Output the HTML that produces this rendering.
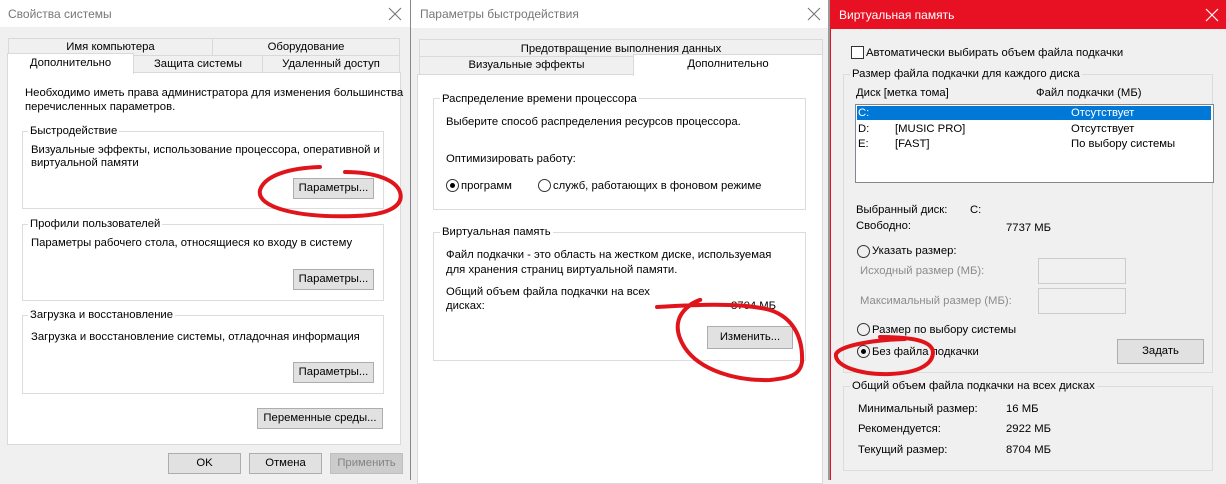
<!DOCTYPE html>
<html><head><meta charset="utf-8"><style>
*{margin:0;padding:0;box-sizing:border-box}
body{width:1226px;height:480px;overflow:hidden;background:#f0f0f0;font-family:"Liberation Sans",sans-serif;font-size:11.3px;color:#000;position:relative}
.a{position:absolute;white-space:nowrap;line-height:14px}
.box{position:absolute;border:1px solid #dcdcdc}
.w{position:absolute;background:#fff}
.btn{position:absolute;background:#e1e1e1;border:1px solid #adadad;text-align:center;line-height:18px}
.tab{position:absolute;background:#f0f0f0;border:1px solid #d9d9d9;text-align:center;line-height:16px}
.lbl{position:absolute;background:#fff;padding:0 2px;line-height:14px;white-space:nowrap}
.g{color:#8c8c8c}
.rad{position:absolute;width:13px;height:13px;border:1px solid #333;border-radius:50%;background:#fff}
.rad.on::after{content:"";position:absolute;left:3px;top:3px;width:5px;height:5px;border-radius:50%;background:#000}
.x{position:absolute;width:14px;height:14px}
</style></head><body>
<!-- Window 1 -->
<div class="w" style="left:0;top:0;width:410px;height:27px"></div>
<div class="a" style="left:8px;top:7px;color:#777;font-size:12px">Свойства системы</div>
<svg class="x" style="left:388px;top:7px" viewBox="0 0 14 14" stroke="#777" stroke-width="1.1"><path d="M1 1L13 13M13 1L1 13"/></svg>
<div style="position:absolute;left:410px;top:0;width:1px;height:480px;background:#888"></div>
<div class="tab" style="left:8px;top:38px;width:205px;height:18px">Имя компьютера</div>
<div class="tab" style="left:212px;top:38px;width:188px;height:18px">Оборудование</div>
<div class="tab" style="left:133px;top:55px;width:130px;height:18px">Защита системы</div>
<div class="tab" style="left:262px;top:55px;width:138px;height:18px">Удаленный доступ</div>
<div class="w" style="left:7px;top:72px;width:394px;height:373px;border:1px solid #d9d9d9"></div>
<div class="w" style="left:7px;top:53px;width:127px;height:21px;border:1px solid #d9d9d9;border-bottom:none;text-align:center;line-height:18px">Дополнительно</div>
<div class="a" style="left:25px;top:86px">Необходимо иметь права администратора для изменения большинства</div>
<div class="a" style="left:25px;top:100px">перечисленных параметров.</div>
<div class="box" style="left:22px;top:131px;width:362px;height:78px"></div>
<div class="lbl" style="left:28px;top:124px">Быстродействие</div>
<div class="a" style="left:31px;top:143px">Визуальные эффекты, использование процессора, оперативной и</div>
<div class="a" style="left:31px;top:156px">виртуальной памяти</div>
<div class="btn" style="left:293px;top:178px;width:81px;height:21px">Параметры...</div>
<div class="box" style="left:22px;top:224px;width:362px;height:77px"></div>
<div class="lbl" style="left:28px;top:217px">Профили пользователей</div>
<div class="a" style="left:31px;top:236px">Параметры рабочего стола, относящиеся ко входу в систему</div>
<div class="btn" style="left:293px;top:269px;width:81px;height:21px">Параметры...</div>
<div class="box" style="left:22px;top:315px;width:362px;height:79px"></div>
<div class="lbl" style="left:28px;top:308px">Загрузка и восстановление</div>
<div class="a" style="left:31px;top:330px">Загрузка и восстановление системы, отладочная информация</div>
<div class="btn" style="left:293px;top:362px;width:81px;height:21px">Параметры...</div>
<div class="btn" style="left:257px;top:408px;width:126px;height:21px">Переменные среды...</div>
<div class="btn" style="left:168px;top:453px;width:73px;height:21px">OK</div>
<div class="btn" style="left:249px;top:453px;width:73px;height:21px">Отмена</div>
<div class="btn" style="left:330px;top:453px;width:73px;height:21px;background:#ccc;border-color:#bfbfbf;color:#838383">Применить</div>

<!-- Window 2 -->
<div class="w" style="left:411px;top:0;width:418px;height:28px"></div>
<div class="a" style="left:420px;top:7px;color:#777;font-size:12px">Параметры быстродействия</div>
<svg class="x" style="left:807px;top:7px" viewBox="0 0 14 14" stroke="#777" stroke-width="1.1"><path d="M1 1L13 13M13 1L1 13"/></svg>
<div style="position:absolute;left:828px;top:0;width:2px;height:480px;background:#9a9a9a"></div>
<div class="tab" style="left:419px;top:39px;width:404px;height:18px;line-height:18px">Предотвращение выполнения данных</div>
<div class="tab" style="left:419px;top:56px;width:215px;height:19px">Визуальные эффекты</div>
<div class="w" style="left:417px;top:74px;width:406px;height:410px;border:1px solid #d9d9d9"></div>
<div class="w" style="left:633px;top:54px;width:190px;height:22px;border:1px solid #d9d9d9;border-bottom:none;text-align:center;line-height:18px">Дополнительно</div>
<div class="box" style="left:433px;top:98px;width:373px;height:112px"></div>
<div class="lbl" style="left:440px;top:92px">Распределение времени процессора</div>
<div class="a" style="left:446px;top:115px">Выберите способ распределения ресурсов процессора.</div>
<div class="a" style="left:446px;top:152px">Оптимизировать работу:</div>
<div class="rad on" style="left:446px;top:179px"></div>
<div class="a" style="left:461px;top:179px">программ</div>
<div class="rad" style="left:538px;top:179px"></div>
<div class="a" style="left:553px;top:179px">служб, работающих в фоновом режиме</div>
<div class="box" style="left:433px;top:232px;width:373px;height:129px"></div>
<div class="lbl" style="left:440px;top:225px">Виртуальная память</div>
<div class="a" style="left:446px;top:248px">Файл подкачки - это область на жестком диске, используемая</div>
<div class="a" style="left:446px;top:263px">для хранения страниц виртуальной памяти.</div>
<div class="a" style="left:446px;top:285px">Общий объем файла подкачки на всех</div>
<div class="a" style="left:446px;top:299px">дисках:</div>
<div class="a" style="left:731px;top:299px">8704 МБ</div>
<div class="btn" style="left:707px;top:326px;width:86px;height:23px;line-height:21px">Изменить...</div>

<!-- Window 3 -->
<div style="position:absolute;left:830px;top:0;width:396px;height:480px;background:#f0f0f0;border-left:1px solid #e81123"></div>
<div style="position:absolute;left:830px;top:0;width:396px;height:29px;background:#e81123"></div>
<div class="a" style="left:839px;top:8px;color:#fff;font-size:12px">Виртуальная память</div>
<svg class="x" style="left:1205px;top:8px" viewBox="0 0 14 14" stroke="#fff" stroke-width="1.2"><path d="M1 1L13 13M13 1L1 13"/></svg>
<div style="position:absolute;left:851px;top:46px;width:13px;height:13px;border:1px solid #333;background:#fff"></div>
<div class="a" style="left:866px;top:46px">Автоматически выбирать объем файла подкачки</div>
<div class="box" style="left:843px;top:74px;width:370px;height:299px"></div>
<div class="lbl" style="left:850px;top:67px;background:#f0f0f0">Размер файла подкачки для каждого диска</div>
<div class="a" style="left:856px;top:86px">Диск [метка тома]</div>
<div class="a" style="left:1036px;top:86px">Файл подкачки (МБ)</div>
<div class="w" style="left:855px;top:104px;width:359px;height:79px;border:1px solid #828790"></div>
<div style="position:absolute;left:857px;top:106px;width:354px;height:14px;background:#0078d7"></div>
<div class="a" style="left:858px;top:106px;color:#fff">C:</div><div class="a" style="left:1071px;top:106px;color:#fff">Отсутствует</div>
<div class="a" style="left:858px;top:122px">D:</div><div class="a" style="left:895px;top:122px">[MUSIC PRO]</div><div class="a" style="left:1071px;top:122px">Отсутствует</div>
<div class="a" style="left:858px;top:137px">E:</div><div class="a" style="left:895px;top:137px">[FAST]</div><div class="a" style="left:1071px;top:137px">По выбору системы</div>
<div class="a" style="left:856px;top:203px">Выбранный диск:</div><div class="a" style="left:970px;top:203px">C:</div>
<div class="a" style="left:856px;top:219px">Свободно:</div><div class="a" style="left:1006px;top:221px">7737 МБ</div>
<div class="rad" style="left:857px;top:245px;background:#f0f0f0"></div>
<div class="a" style="left:872px;top:244px">Указать размер:</div>
<div class="a g" style="left:860px;top:264px">Исходный размер (МБ):</div>
<div style="position:absolute;left:1038px;top:258px;width:88px;height:26px;border:1px solid #ccc"></div>
<div class="a g" style="left:860px;top:294px">Максимальный размер (МБ):</div>
<div style="position:absolute;left:1038px;top:288px;width:88px;height:26px;border:1px solid #ccc"></div>
<div class="rad" style="left:857px;top:323px;background:#f0f0f0"></div>
<div class="a" style="left:872px;top:323px">Размер по выбору системы</div>
<div class="rad on" style="left:857px;top:345px;background:#f0f0f0"></div>
<div class="a" style="left:872px;top:345px">Без файла подкачки</div>
<div class="btn" style="left:1117px;top:339px;width:87px;height:25px;line-height:23px">Задать</div>
<div class="box" style="left:843px;top:386px;width:370px;height:85px"></div>
<div class="lbl" style="left:850px;top:379px;background:#f0f0f0">Общий объем файла подкачки на всех дисках</div>
<div class="a" style="left:858px;top:402px">Минимальный размер:</div><div class="a" style="left:1006px;top:402px">16 МБ</div>
<div class="a" style="left:858px;top:422px">Рекомендуется:</div><div class="a" style="left:1006px;top:422px">2922 МБ</div>
<div class="a" style="left:858px;top:443px">Текущий размер:</div><div class="a" style="left:1006px;top:443px">8704 МБ</div>

<svg width="1226" height="480" style="position:absolute;left:0;top:0" fill="none" stroke="#e0151b" stroke-width="4" stroke-linecap="round">
<path d="M320 167 C290 168 265 175 260 190 C256 208 300 218 355 216 C390 215 404 205 400 192 C396 180 375 172 345 172"/>
<path d="M657 307 C690 305 740 302 770 310 C795 318 803 340 802 362 C800 375 790 378 770 380 C735 381 700 370 685 348 C672 328 676 310 700 300 C702 299 694 302 690 305"/>
<path d="M905 339 C870 340 840 346 836 354 C834 366 860 375 890 374 C915 373 933 366 933 352 C932 343 920 337 880 337"/>
</svg>
</body></html>
